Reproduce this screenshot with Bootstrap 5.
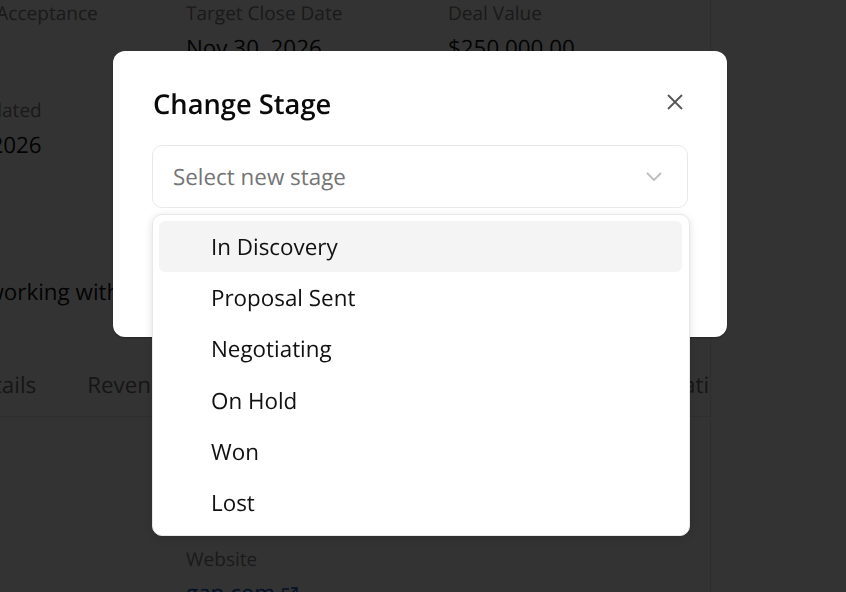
<!DOCTYPE html>
<html lang="en">
<head>
<meta charset="utf-8">
<title>Change Stage</title>
<link rel="stylesheet" href="https://cdn.jsdelivr.net/npm/bootstrap@5.3.0/dist/css/bootstrap.min.css">
<style>
html,body{height:100%;overflow:hidden}
body{font-family:"Open Sans",sans-serif;font-size:22.4px;color:#111;background:#fff;text-rendering:geometricPrecision}
.page-sheet{width:711px;height:592px;border-right:1px solid #e6e6e6;overflow:hidden}
.field-grid{display:grid;grid-template-columns:262px 262px 262px;margin-left:-76px;margin-top:-1px}
.field-cell{height:97px}
.shift-a{margin-left:-1px}
.shift-b{margin-left:4px}
.field-label{font-size:19.04px;line-height:28px;color:#808080;margin-bottom:7px;white-space:nowrap}
.field-value{line-height:28px;white-space:nowrap}
.intro-text{margin:85px 0 0 -134px;line-height:28px;white-space:nowrap}
.tab-strip{display:flex;gap:51px;margin:65px 0 0 -35px;padding-bottom:17px;border-bottom:1px solid #e6e6e6;line-height:28px;white-space:nowrap;color:#707070;overflow:hidden}
.tab-last{margin-left:-11px}
.site-block{margin:128px 0 0 186px}
.site-block .field-label{margin-bottom:3px}
.site-link{color:#0b4dc4;text-decoration:none;line-height:28px}
.dim-layer{position:fixed;inset:0;background:rgba(0,0,0,.8);z-index:10}
.stage-dialog{position:fixed;left:113px;top:51px;width:614px;height:286.4px;border:0;border-radius:12px;padding:37px 39px;z-index:20;background:#fff;box-shadow:0 1px 2px rgba(0,0,0,.3)}
.stage-title{font-size:27.3px;font-weight:600;line-height:32px;color:#0a0a0a;margin:0 0 25px 1px}
.close-x{background:none;border:0;padding:0;line-height:0;margin-top:6px;margin-right:5px}
.stage-select{width:536px;height:63.4px;border:1px solid #e8e8e8;border-radius:10px;padding:0 25px 0 20px;color:#757575;background:#fff}
.stage-menu{position:absolute;left:39px;top:163.3px;width:538px;height:322px;margin:0;padding:5.9px 7px 6px 6px;border:1px solid #e8e8e8;border-radius:10px;background:#fff;font-size:22.4px;box-shadow:0 2px 8px rgba(0,0,0,.12);display:block}
.stage-menu .dropdown-item{height:51.2px;padding:0 0 0 52px;display:flex;align-items:center;color:#111;border-radius:6px}
.stage-menu .dropdown-item.is-hover{background:#f4f4f4}
</style>
</head>
<body>
<div class="page-sheet">
  <div class="field-grid">
    <div class="field-cell"><div class="field-label shift-a">Contact Acceptance</div></div>
    <div class="field-cell"><div class="field-label">Target Close Date</div><div class="field-value">Nov 30, 2026</div></div>
    <div class="field-cell"><div class="field-label">Deal Value</div><div class="field-value">$250,000.00</div></div>
    <div class="field-cell shift-b"><div class="field-label">Date Related</div><div class="field-value">Jan 1, 2026</div></div>
  </div>
  <p class="intro-text">We are still working with the buyer on terms.</p>
  <div class="tab-strip"><span>Details</span><span>Revenue</span><span>Contact</span><span>Activity</span><span>Timeline</span><span class="tab-last">Negotiations</span></div>
  <div class="site-block">
    <div class="field-label">Website</div>
    <a class="site-link" href="#">gap.com <svg width="18" height="18" viewBox="0 0 18 18" fill="none" stroke="currentColor" stroke-width="1.3"><path d="M8 3H2v13h13v-6M10 2h6v6M16 2 8 10"/></svg></a>
  </div>
</div>
<div class="dim-layer"></div>
<div class="modal-content stage-dialog">
  <div class="d-flex justify-content-between align-items-start">
    <h5 class="stage-title">Change Stage</h5>
    <button class="close-x" type="button" aria-label="Close"><svg width="16" height="16" viewBox="0 0 16 16" fill="none" stroke="#555" stroke-width="1.8"><path d="M1 1l14 14M15 1 1 15"/></svg></button>
  </div>
  <div class="stage-select d-flex align-items-center justify-content-between">
    <span>Select new stage</span>
    <svg width="16" height="9" viewBox="0 0 16 9" fill="none" stroke="#bdbdbd" stroke-width="1.8"><path d="M1 1l7 7 7-7"/></svg>
  </div>
  <div class="dropdown-menu stage-menu">
    <a class="dropdown-item is-hover" href="#">In Discovery</a>
    <a class="dropdown-item" href="#">Proposal Sent</a>
    <a class="dropdown-item" href="#">Negotiating</a>
    <a class="dropdown-item" href="#">On Hold</a>
    <a class="dropdown-item" href="#">Won</a>
    <a class="dropdown-item" href="#">Lost</a>
  </div>
</div>
<script src="https://cdn.jsdelivr.net/npm/bootstrap@5.3.0/dist/js/bootstrap.bundle.min.js"></script>
</body>
</html>
